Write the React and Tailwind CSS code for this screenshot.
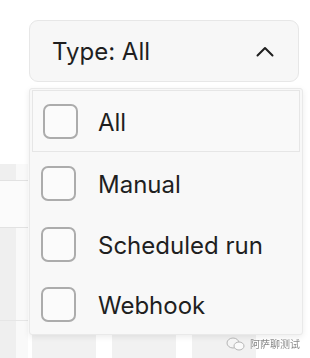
import React from 'react';

const options = [
  { label: 'All', active: true, h: 'h-[62px]' },
  { label: 'Manual', h: 'h-[62px]' },
  { label: 'Scheduled run', h: 'h-[60px]' },
  { label: 'Webhook', h: 'h-[60px]' },
];

function Chevron() {
  return (
    <svg width="18" height="11" viewBox="0 0 18 11" fill="none">
      <path d="M1.5 9.5L9 2l7.5 7.5" stroke="#1f1f1f" strokeWidth="2" strokeLinecap="round" strokeLinejoin="round" />
    </svg>
  );
}

function Backdrop() {
  return (
    <div className="absolute inset-0 flex flex-col pt-[164px]">
      <div className="flex h-[16px] w-[28px]">
        <div className="w-[16px] bg-[#efefef]" />
        <div className="w-[12px] bg-[#f9f9f9]" />
      </div>
      <div className="h-px w-[28px] bg-[#e2e2e2]" />
      <div className="h-[46px] w-[28px] bg-[#fbfbfb]" />
      <div className="h-px w-[28px] bg-[#e2e2e2]" />
      <div className="flex h-[92px] w-[28px]">
        <div className="w-[16px] bg-[#efefef]" />
        <div className="w-[12px] bg-[#f9f9f9]" />
      </div>
      <div className="h-px w-[28px] bg-[#e6e6e6]" />
      <div className="flex flex-1">
        <div className="w-[16px] bg-[#efefef]" />
        <div className="w-[12px] bg-[#f9f9f9]" />
        <div className="flex flex-1 items-end gap-[16px] pl-[4px]">
          <div className="h-[24px] w-[64px] bg-[#f1f1f1]" />
          <div className="h-[24px] w-[64px] bg-[#f1f1f1]" />
          <div className="h-[24px] w-[64px] bg-[#f1f1f1]" />
        </div>
      </div>
    </div>
  );
}

export default function App() {
  return (
    <div className="relative h-[358px] w-[310px] overflow-hidden bg-white font-['Inter',sans-serif] text-[#1f1f1f]">
      <Backdrop />

      <div className="relative pl-[29px] pt-[20px]">
        <button className="flex h-[62px] w-[270px] items-center justify-between rounded-[9px] border border-[#e7e7e7] bg-[#f7f7f7] pl-[22px] pr-[24px] text-[24px] leading-none">
          <span className="mt-[2px]">Type: All</span>
          <Chevron />
        </button>
      </div>

      <div className="absolute left-[29px] top-[88px] w-[274px] rounded-[3px] border border-[#e9e9e9] bg-[#f8f8f8] px-[2px] pt-[1px] shadow-[0_2px_6px_rgba(0,0,0,0.08)]">
        {options.map((o) => (
          <div
            key={o.label}
            className={
              o.active
                ? `flex ${o.h} items-center gap-[20px] border border-[#e6e6e6] bg-[#f9f9f9] pl-[10px]`
                : `flex ${o.h} items-center gap-[22px] pl-[9px]`
            }
          >
            <span className="h-[35px] w-[35px] shrink-0 rounded-[7px] border-2 border-[#acacac] bg-[#fbfbfb]" />
            <span className="mt-[3px] text-[24px] leading-none">{o.label}</span>
          </div>
        ))}
      </div>

      <div className="absolute bottom-[7px] right-[10px] flex items-center gap-[4px] text-[10px] text-[#8a8a8a]">
        <svg width="20" height="14" viewBox="0 0 20 14" fill="none">
          <ellipse cx="7" cy="6" rx="6" ry="5" fill="#f4f4f4" stroke="#b5b5b5" strokeWidth="1" />
          <ellipse cx="13" cy="9" rx="5" ry="4" fill="#fafafa" stroke="#b5b5b5" strokeWidth="1" />
        </svg>
        <span className="font-['Noto_Sans_CJK_SC',sans-serif] drop-shadow-[0_0_1px_white]">阿萨聊测试</span>
      </div>
    </div>
  );
}
